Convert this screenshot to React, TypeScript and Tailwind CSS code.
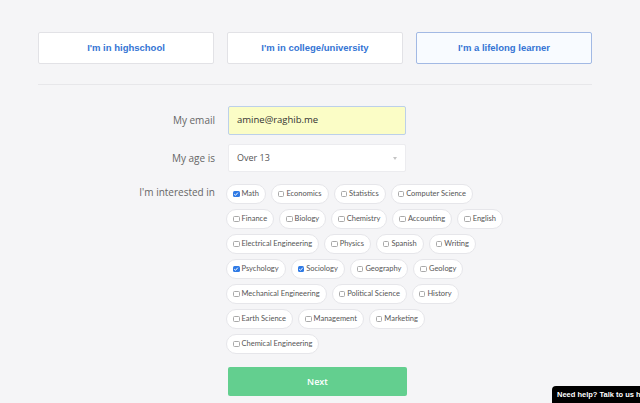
import React from 'react';

const subjects: { name: string; checked?: boolean }[] = [
  { name: 'Math', checked: true },
  { name: 'Economics' },
  { name: 'Statistics' },
  { name: 'Computer Science' },
  { name: 'Finance' },
  { name: 'Biology' },
  { name: 'Chemistry' },
  { name: 'Accounting' },
  { name: 'English' },
  { name: 'Electrical Engineering' },
  { name: 'Physics' },
  { name: 'Spanish' },
  { name: 'Writing' },
  { name: 'Psychology', checked: true },
  { name: 'Sociology', checked: true },
  { name: 'Geography' },
  { name: 'Geology' },
  { name: 'Mechanical Engineering' },
  { name: 'Political Science' },
  { name: 'History' },
  { name: 'Earth Science' },
  { name: 'Management' },
  { name: 'Marketing' },
  { name: 'Chemical Engineering' },
];

const Chip: React.FC<{ name: string; checked?: boolean }> = ({ name, checked }) => (
  <div
    className="h-[20px] flex items-center gap-[2px] pl-[6px] pr-[6px] bg-white border border-[#e6e6ea] rounded-full text-[7.5px] text-[#555]"
    style={{ fontFamily: 'Lato, sans-serif' }}
  >
    {checked ? (
      <span className="w-[6.5px] h-[6.5px] rounded-[1.5px] bg-[#2f7ae5] flex items-center justify-center">
        <svg viewBox="0 0 10 10" className="w-[6px] h-[6px]">
          <path d="M2 5.2 L4.2 7.2 L8 2.8" fill="none" stroke="white" strokeWidth="1.6" />
        </svg>
      </span>
    ) : (
      <span className="w-[6.5px] h-[6.5px] rounded-[1.5px] bg-white border border-[#a9a9a9]" />
    )}
    <span>{name}</span>
  </div>
);

export default function App() {
  return (
    <div className="w-[640px] h-[403px] bg-[#f5f5f7] relative overflow-hidden" style={{ fontFamily: '"Open Sans", sans-serif' }}>
      <div className="pl-[38px] pt-[32px] w-[592px]">
        <div className="flex gap-[13px]" style={{ fontFamily: '"Liberation Sans", Arial, sans-serif' }}>
          <button className="w-[176px] h-[32px] bg-white border border-[#e2e2e6] rounded-[2px] text-[9.5px] font-bold text-[#3474d4]">I'm in highschool</button>
          <button className="w-[176px] h-[32px] bg-white border border-[#e2e2e6] rounded-[2px] text-[9.5px] font-bold text-[#3474d4]">I'm in college/university</button>
          <button className="w-[176px] h-[32px] bg-[#f8fbff] border border-[#a2b9e4] rounded-[2px] text-[9.5px] font-bold text-[#3474d4]">I'm a lifelong learner</button>
        </div>
        <div className="mt-[20px] h-px bg-[#e7e7ea]" />

        <div className="mt-[21px] flex flex-col">
          <div className="flex items-center gap-[13px]">
            <div className="w-[177px] text-right text-[10px] text-[#666]">My email</div>
            <div className="w-[178px] h-[29px] bg-[#fbfdc6] border border-[#bcd0ea] rounded-[2px] flex items-center px-[8px] text-[9.5px] text-[#333]">amine@raghib.me</div>
          </div>
          <div className="mt-[9px] flex items-center gap-[13px]">
            <div className="w-[177px] text-right text-[10px] text-[#666]">My age is</div>
            <div className="w-[178px] h-[28px] bg-white border border-[#ececef] rounded-[2px] flex items-center justify-between px-[8px] text-[9px] text-[#555]">
              <span>Over 13</span>
              <span className="w-0 h-0 border-l-[2.5px] border-r-[2.5px] border-t-[3px] border-l-transparent border-r-transparent border-t-[#c4c4c4]" />
            </div>
          </div>
          <div className="mt-[12px] flex items-start gap-[13px]">
            <div className="w-[177px] text-right text-[10px] text-[#666] leading-[16px]">I'm interested in</div>
            <div className="w-[282px] flex flex-wrap gap-x-[5px] gap-y-[5px] -ml-[2px]">
              {subjects.map((s) => (
                <Chip key={s.name} name={s.name} checked={s.checked} />
              ))}
            </div>
          </div>
          <div className="mt-[13px] flex gap-[13px]">
            <div className="w-[177px]" />
            <button className="w-[179px] h-[29px] bg-[#63cf8f] rounded-[2px] text-[9px] font-semibold text-white">Next</button>
          </div>
        </div>
      </div>

      <div className="absolute right-0 bottom-0 w-[88px] h-[17px] bg-black rounded-tl-[4px] flex items-center pl-[5px] overflow-hidden whitespace-nowrap text-[7.5px] font-bold text-white" style={{ fontFamily: '"Liberation Sans", Arial, sans-serif' }}>
        Need help? Talk to us he
      </div>
    </div>
  );
}
